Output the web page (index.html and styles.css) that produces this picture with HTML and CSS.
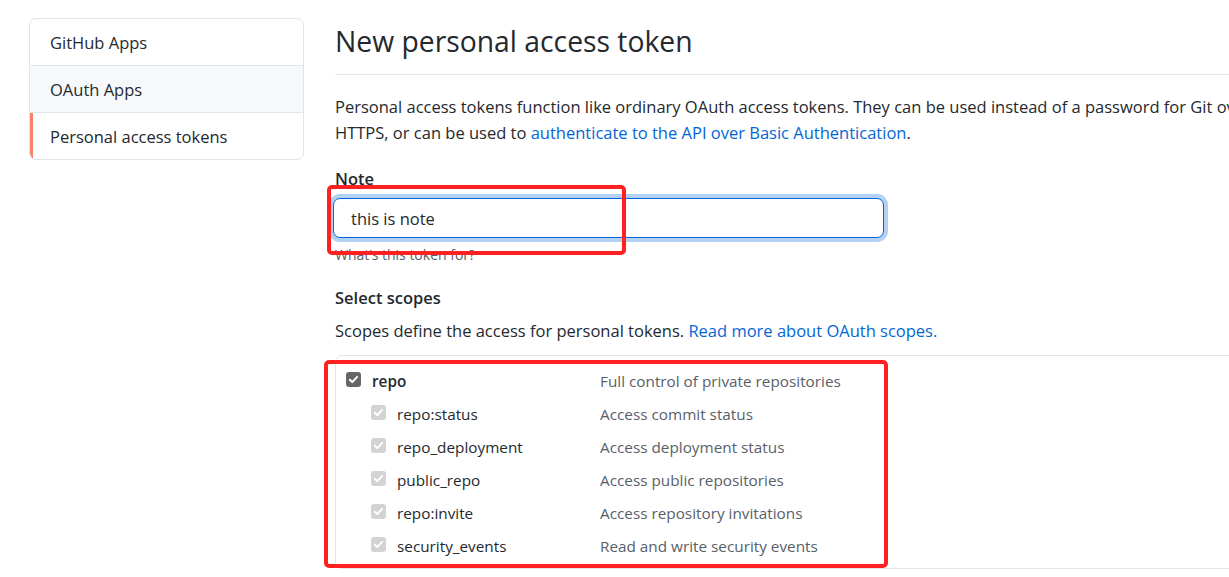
FILE: index.html
```html
<!DOCTYPE html>
<html lang="en">
<head>
<meta charset="utf-8">
<title>New personal access token</title>
<link rel="stylesheet" href="styles.css">
</head>
<body>
<div class="layout">
  <nav class="menu">
    <a class="menu-item">GitHub Apps</a>
    <a class="menu-item hovered">OAuth Apps</a>
    <a class="menu-item selected">Personal access tokens</a>
  </nav>
  <main class="main">
    <h2 class="subhead">New personal access token</h2>
    <p class="intro">Personal access tokens function like ordinary OAuth access tokens. They can be used instead of a password for Git over HTTPS, or can be used to <a class="link">authenticate to the API over Basic Authentication</a>.</p>

    <div class="form-group">
      <label class="label">Note</label>
      <input class="input" type="text" value="this is note">
      <p class="note">What’s this token for?</p>
      <span class="annot annot-note"></span>
    </div>

    <h3 class="label scopes-title">Select scopes</h3>
    <p class="scopes-desc">Scopes define the access for personal tokens. <a class="link">Read more about OAuth scopes.</a></p>

    <div class="scopes">
      <div class="scope-row parent">
        <span class="check dark"><svg viewBox="0 0 16 16"><path d="M3.5 8.3l3 3 6-6.5" /></svg></span>
        <span class="scope-name">repo</span>
        <span class="scope-desc">Full control of private repositories</span>
      </div>
      <div class="scope-row child">
        <span class="check light"><svg viewBox="0 0 16 16"><path d="M3.5 8.3l3 3 6-6.5" /></svg></span>
        <span class="scope-name">repo:status</span>
        <span class="scope-desc">Access commit status</span>
      </div>
      <div class="scope-row child">
        <span class="check light"><svg viewBox="0 0 16 16"><path d="M3.5 8.3l3 3 6-6.5" /></svg></span>
        <span class="scope-name">repo_deployment</span>
        <span class="scope-desc">Access deployment status</span>
      </div>
      <div class="scope-row child">
        <span class="check light"><svg viewBox="0 0 16 16"><path d="M3.5 8.3l3 3 6-6.5" /></svg></span>
        <span class="scope-name">public_repo</span>
        <span class="scope-desc">Access public repositories</span>
      </div>
      <div class="scope-row child">
        <span class="check light"><svg viewBox="0 0 16 16"><path d="M3.5 8.3l3 3 6-6.5" /></svg></span>
        <span class="scope-name">repo:invite</span>
        <span class="scope-desc">Access repository invitations</span>
      </div>
      <div class="scope-row child">
        <span class="check light"><svg viewBox="0 0 16 16"><path d="M3.5 8.3l3 3 6-6.5" /></svg></span>
        <span class="scope-name">security_events</span>
        <span class="scope-desc">Read and write security events</span>
      </div>
      <span class="annot annot-scopes"></span>
    </div>
  </main>
</div>
</body>
</html>
```

FILE: styles.css
```css
html, body {
  margin: 0;
  padding: 0;
  background: #fff;
  overflow: hidden;
}

body {
  font-family: "Open Sans", "Noto Sans", "Liberation Sans", sans-serif;
  font-size: 16.5px;
  line-height: 26px;
  color: #24292e;
}

.layout {
  display: flex;
  gap: 31px;
  padding: 18px 0 0 29px;
  width: 1400px;
}

.menu {
  flex: 0 0 275px;
  align-self: flex-start;
  display: flex;
  flex-direction: column;
  border: 1px solid #e1e4e8;
  border-radius: 7px;
  overflow: hidden;
  box-sizing: border-box;
}

.menu-item {
  display: block;
  height: 47px;
  line-height: 47px;
  padding: 0 20px;
  color: #24292e;
  border-bottom: 1px solid #e1e4e8;
  box-sizing: border-box;
  white-space: nowrap;
}

.menu-item:last-child {
  border-bottom: 0;
  height: 46px;
  line-height: 48px;
}

.menu-item.hovered {
  background: #f6f8fa;
}

.menu-item.selected {
  border-left: 3px solid #f9826c;
  padding-left: 17px;
}

.main {
  flex: 0 0 930px;
  position: relative;
}

.subhead {
  margin: 0;
  font-size: 28.3px;
  font-weight: 400;
  line-height: 37px;
  padding: 5px 0 14px;
  border-bottom: 1px solid #e1e4e8;
}

.intro {
  margin: 19px 0 0;
  line-height: 26px;
}

.link {
  color: #0366d6;
  text-decoration: none;
}

.form-group {
  position: relative;
  margin-top: 20px;
}

.label {
  display: block;
  margin: 0;
  font-size: 16.5px;
  font-weight: 600;
  line-height: 26px;
}

.input {
  display: block;
  box-sizing: border-box;
  width: 551px;
  height: 40px;
  margin: 6px 0 0 -2px;
  padding: 0 17px;
  font: inherit;
  font-size: 16.5px;
  color: #24292e;
  border: 1px solid #0366d6;
  border-radius: 7px;
  outline: none;
  box-shadow: 0 0 0 4px rgba(3, 102, 214, 0.3);
  background: #fff;
}

.note {
  margin: 6px 0 0;
  font-size: 14px;
  line-height: 22px;
  color: #586069;
}

.scopes-title {
  margin-top: 19px;
}

.scopes-desc {
  margin: 7px 0 0;
  line-height: 26px;
}

.scopes {
  position: relative;
  margin-top: 11px;
  border: 1px solid #e1e4e8;
  border-radius: 7px;
  padding: 8px 0 6px 10px;
  font-size: 15.3px;
}

.scope-row {
  display: flex;
  align-items: center;
  height: 33px;
}

.scope-row.child {
  padding-left: 25px;
}

.check {
  flex: 0 0 15px;
  width: 15px;
  height: 15px;
  border-radius: 3px;
  display: flex;
  align-items: center;
  justify-content: center;
  margin-top: -3px;
}

.check svg {
  width: 13px;
  height: 13px;
  fill: none;
  stroke: #fff;
  stroke-width: 2.4;
  stroke-linecap: round;
  stroke-linejoin: round;
}

.check.dark {
  background: #666;
}

.check.light {
  background: #d3d3d3;
}

.scope-name {
  margin-left: 11px;
  flex: 0 0 203px;
}

.scope-row.parent .scope-name {
  font-weight: 600;
  flex-basis: 228px;
}

.scope-desc {
  color: #586069;
}

.annot {
  position: absolute;
  border: 4px solid #ff2121;
  border-radius: 5px;
  box-sizing: border-box;
  pointer-events: none;
}

.annot-note {
  left: -8px;
  top: 19px;
  width: 299px;
  height: 70px;
}

.annot-scopes {
  left: -12px;
  top: 4px;
  width: 564px;
  height: 208px;
}
```
